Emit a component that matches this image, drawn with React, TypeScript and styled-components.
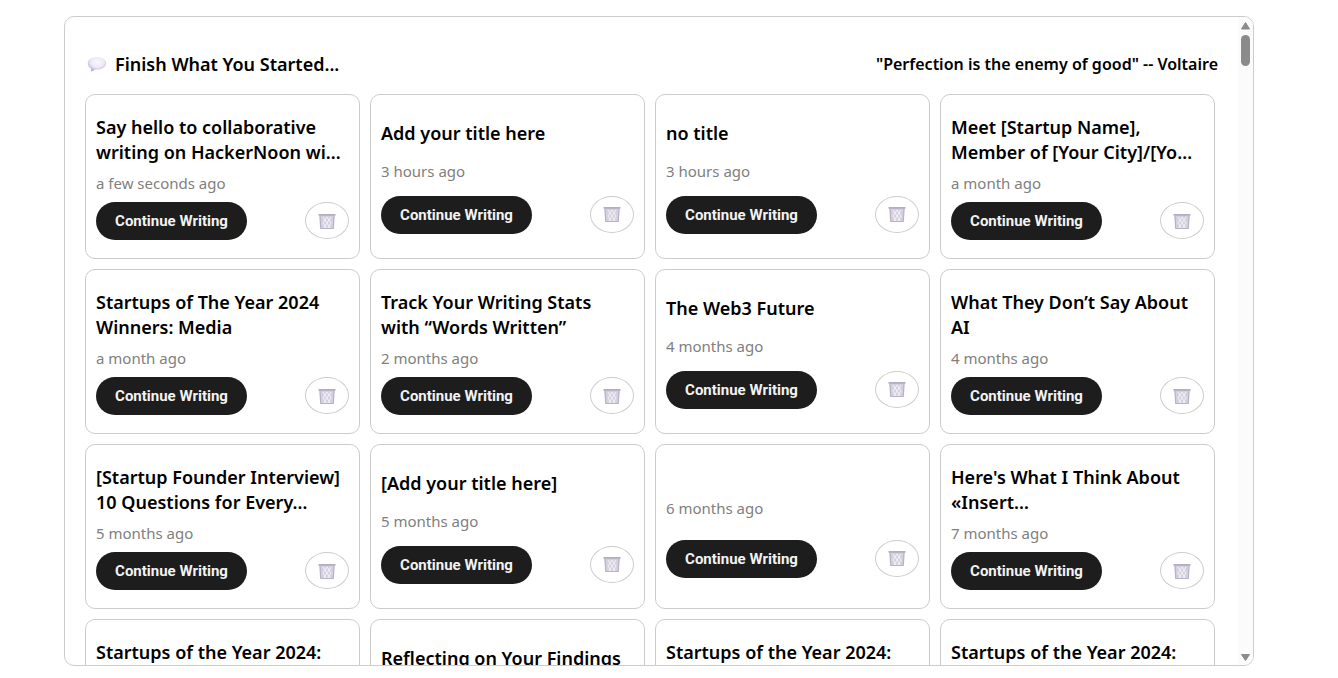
import React from "react";
import styled, { createGlobalStyle } from "styled-components";

const GlobalStyle = createGlobalStyle`
  * { box-sizing: border-box; }
  body {
    margin: 0;
    background: #fff;
    color: #000;
    font-family: "Noto Sans", "Open Sans", sans-serif;
  }
`;

const Page = styled.main`
  height: 100vh;
  padding: 16px 84px 12px 64px;
`;

const Panel = styled.section`
  display: flex;
  height: 100%;
  border: 1px solid #ccc;
  border-radius: 10px;
  overflow: hidden;
`;

const Content = styled.div`
  flex: 1;
  min-width: 0;
  overflow-y: auto;
  scrollbar-width: none;
  padding: 0 20px;
`;

const Header = styled.header`
  display: flex;
  align-items: center;
  justify-content: space-between;
  height: 77px;
  padding-top: 16px;
`;

const Heading = styled.h2`
  display: flex;
  align-items: center;
  gap: 8px;
  margin: 0;
  padding-left: 2px;
  font-size: 18px;
  line-height: 24px;
  font-weight: 600;
`;

const Quote = styled.p`
  margin: 0;
  font-size: 16px;
  line-height: 24px;
  font-weight: 600;
`;

const Grid = styled.div`
  display: grid;
  grid-template-columns: repeat(4, minmax(0, 1fr));
  grid-auto-rows: 165px;
  gap: 10px;
  padding: 0 3px 20px 0;
`;

const Card = styled.article`
  display: flex;
  flex-direction: column;
  justify-content: space-evenly;
  padding: 12px 10px 10px;
  border: 1px solid #ccc;
  border-radius: 10px;
`;

const Title = styled.h3`
  margin: 0;
  font-size: 18px;
  line-height: 25px;
  font-weight: 600;
`;

const TitleLine = styled.span`
  display: block;
  white-space: nowrap;
`;

const Time = styled.time`
  font-size: 15px;
  line-height: 21px;
  color: #808080;
`;

const Actions = styled.div`
  display: flex;
  justify-content: space-between;
`;

const ContinueButton = styled.button`
  width: 151px;
  height: 38px;
  padding: 0;
  border: 0;
  border-radius: 20px;
  background: #1d1d1d;
  color: #f2f2f2;
  font-family: Roboto, sans-serif;
  font-size: 15px;
  font-weight: 700;
  cursor: pointer;
`;

const DeleteButton = styled.button`
  display: flex;
  align-items: center;
  justify-content: center;
  width: 44px;
  height: 37px;
  padding: 0;
  border: 1px solid #ccc;
  border-radius: 50%;
  background: #fff;
  cursor: pointer;
`;

const ScrollTrack = styled.div`
  display: flex;
  flex-direction: column;
  align-items: center;
  width: 15px;
  padding: 4px 0 3px;
  background: #fbfbfb;
`;

const ScrollThumb = styled.div`
  width: 9px;
  height: 31px;
  margin: 5px 0 auto;
  border-radius: 5px;
  background: #8b8b8b;
`;

const BalloonIcon = () => (
  <svg width="20" height="18" viewBox="0 0 20 18" aria-hidden="true">
    <defs>
      <radialGradient id="balloon" cx="52%" cy="35%" r="62%">
        <stop offset="0" stopColor="#faf7fd" />
        <stop offset="0.6" stopColor="#eee8f6" />
        <stop offset="1" stopColor="#bcabd8" />
      </radialGradient>
    </defs>
    <path
      d="M10 2C4.700 2 .8 4.600.8 8.200c0 2.400 1.200 4.100 3.200 5.200.1 1.200 0 2.200-.4 3.100 1.900-.2 3.300-.9 4.400-2.100.7.1 1.300.1 2 .1 5.300 0 9.200-2.700 9.200-6.300S15.300 2 10 2z"
      fill="url(#balloon)"
    />
  </svg>
);

const BasketIcon = () => (
  <svg width="20" height="18" viewBox="0 0 20 18" aria-hidden="true">
    <path d="M2.500 3h15l-1 14h-13z" fill="#d5d0df" />
    <path
      d="M6 5l2 3-2 3 2 3-1 2M10 5l-2 3 2 3-2 3 1 2M10 5l2 3-2 3 2 3-1 2M14 5l-2 3 2 3-2 3 1 2"
      fill="none"
      stroke="#f4f2f7"
      strokeWidth="1"
    />
    <path d="M3 4l.7 12.500M17 4l-.7 12.500M3.500 16.500h13" fill="none" stroke="#b8b2c6" strokeWidth="1.200" />
    <path d="M1.500 2h17v1.800h-17z" fill="#b2adbf" />
  </svg>
);

interface Draft {
  title: string[];
  edited: string;
}

const drafts: Draft[] = [
  { title: ["Say hello to collaborative", "writing on HackerNoon wi…"], edited: "a few seconds ago" },
  { title: ["Add your title here"], edited: "3 hours ago" },
  { title: ["no title"], edited: "3 hours ago" },
  { title: ["Meet [Startup Name],", "Member of [Your City]/[Yo…"], edited: "a month ago" },
  { title: ["Startups of The Year 2024", "Winners: Media"], edited: "a month ago" },
  { title: ["Track Your Writing Stats", "with “Words Written”"], edited: "2 months ago" },
  { title: ["The Web3 Future"], edited: "4 months ago" },
  { title: ["What They Don’t Say About", "AI"], edited: "4 months ago" },
  { title: ["[Startup Founder Interview]", "10 Questions for Every…"], edited: "5 months ago" },
  { title: ["[Add your title here]"], edited: "5 months ago" },
  { title: [], edited: "6 months ago" },
  { title: ["Here's What I Think About", "«Insert…"], edited: "7 months ago" },
  { title: ["Startups of the Year 2024:", "Media"], edited: "7 months ago" },
  { title: ["Reflecting on Your Findings"], edited: "7 months ago" },
  { title: ["Startups of the Year 2024:", "Media"], edited: "7 months ago" },
  { title: ["Startups of the Year 2024:", "Media"], edited: "7 months ago" },
];

const DraftCard = ({ title, edited }: Draft) => (
  <Card>
    <Title>
      {title.map((line) => (
        <TitleLine key={line}>{line}</TitleLine>
      ))}
    </Title>
    <Time>{edited}</Time>
    <Actions>
      <ContinueButton type="button">Continue Writing</ContinueButton>
      <DeleteButton type="button" aria-label="Delete draft">
        <BasketIcon />
      </DeleteButton>
    </Actions>
  </Card>
);

export default function App() {
  return (
    <Page>
      <GlobalStyle />
      <Panel>
        <Content>
          <Header>
            <Heading>
              <BalloonIcon />
              Finish What You Started...
            </Heading>
            <Quote>"Perfection is the enemy of good" -- Voltaire</Quote>
          </Header>
          <Grid>
            {drafts.map((draft, index) => (
              <DraftCard key={index} {...draft} />
            ))}
          </Grid>
        </Content>
        <ScrollTrack aria-hidden="true">
          <svg width="11" height="9" viewBox="0 0 11 9">
            <path d="M5.500 1.500L9.500 8h-8z" fill="#8b8b8b" stroke="#8b8b8b" strokeLinejoin="round" />
          </svg>
          <ScrollThumb />
          <svg width="11" height="9" viewBox="0 0 11 9">
            <path d="M1.500 1.500h8L5.500 7.500z" fill="#8b8b8b" stroke="#8b8b8b" strokeLinejoin="round" />
          </svg>
        </ScrollTrack>
      </Panel>
    </Page>
  );
}
